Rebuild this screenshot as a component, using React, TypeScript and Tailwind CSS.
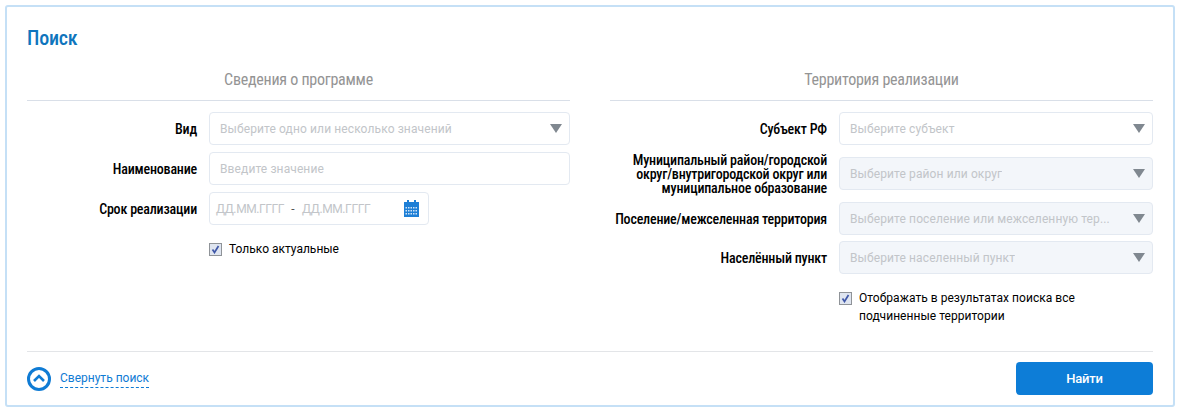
function Caret() {
  return (
    <svg width="12" height="9" viewBox="0 0 12 9" className="shrink-0">
      <path d="M0 0H12L6 9Z" fill="#808890" />
    </svg>
  );
}

function Select({ text, disabled }: { text: string; disabled?: boolean }) {
  return (
    <div className={`flex h-[33px] flex-1 min-w-0 items-center justify-between rounded border border-[#e3e9f1] pl-[10px] pr-[7px] ${disabled ? "bg-[#f3f6fa]" : "bg-white"}`}>
      <span className="text-[12px] tracking-[0.11px] text-[#c2c5c9] truncate">{text}</span>
      <Caret />
    </div>
  );
}

function Label({ children, w }: { children: React.ReactNode; w: string }) {
  return (
    <div className={`${w} shrink-0 text-right text-[14px] leading-[14px] font-medium text-black [font-stretch:75%] tracking-[-0.2px]`}>
      {children}
    </div>
  );
}

function Check() {
  return (
    <span className="flex h-[13px] w-[13px] shrink-0 items-center justify-center border border-[#8f9398] bg-[#dfe5f0]">
      <svg width="9" height="9" viewBox="0 0 9 9">
        <path d="M1.5 4.5L3.5 7.5L7.5 1" fill="none" stroke="#3f57a8" strokeWidth="1.7" />
      </svg>
    </span>
  );
}

function Calendar() {
  return (
    <svg width="15" height="17" viewBox="0 0 15 17" className="shrink-0">
      <rect x="0" y="2" width="15" height="15" fill="#1e7fd6" />
      <rect x="3" y="0" width="2" height="3" fill="#1e7fd6" />
      <rect x="10" y="0" width="2" height="3" fill="#1e7fd6" />
      <g fill="#cfe4f7">
        {[7, 10, 13].flatMap((y) =>
          [1.5, 4, 6.5, 9, 11.5].map((x) => <rect key={`${x}-${y}`} x={x} y={y} width="1.5" height="1.5" />)
        )}
      </g>
    </svg>
  );
}

function Heading({ children }: { children: React.ReactNode }) {
  return (
    <div className="mb-[11px] flex h-[31px] items-start justify-center border-b border-[#d9dfe8] text-[16px] leading-[20px] font-[450] tracking-[-0.25px] text-[#949494] [font-stretch:75%]">
      {children}
    </div>
  );
}

export default function App() {
  return (
    <div className="h-[413px] w-[1181px] bg-white p-[5px] font-['Roboto',sans-serif]">
      <div className="flex h-[402px] w-[1170px] flex-col rounded-[3px] border-2 border-[#c5e0f6] px-[20px] pt-[19px]">
        <h1 className="h-[24px] text-[20px] leading-[24px] font-medium tracking-[-0.2px] text-[#0f75bd] [font-stretch:75%]">Поиск</h1>
        <div className="mt-[20px] flex h-[282px] gap-[40px] border-b border-[#e3e5e8]">
          <div className="w-[543px]">
            <Heading>Сведения о программе</Heading>
            <div className="flex flex-col gap-[7px]">
              <div className="flex h-[33px] items-center gap-[12px]">
                <Label w="w-[170px]">Вид</Label>
                <Select text="Выберите одно или несколько значений" />
              </div>
              <div className="flex h-[33px] items-center gap-[12px]">
                <Label w="w-[170px]">Наименование</Label>
                <div className="flex h-[33px] flex-1 items-center rounded border border-[#e3e9f1] pl-[10px]">
                  <span className="text-[12px] tracking-[0.11px] text-[#c2c5c9]">Введите значение</span>
                </div>
              </div>
              <div className="flex h-[33px] items-center gap-[12px]">
                <Label w="w-[170px]">Срок реализации</Label>
                <div className="flex h-[33px] w-[220px] items-center justify-between rounded border border-[#e3e9f1] pl-[6px] pr-[9px] text-[12px] text-[#c2c5c9]">
                  <span className="flex items-center tracking-[-0.4px]">
                    <span>ДД.ММ.ГГГГ</span>
                    <span className="ml-[7px] mr-[8px] text-[#555]">-</span>
                    <span>ДД.ММ.ГГГГ</span>
                  </span>
                  <Calendar />
                </div>
              </div>
              <div className="ml-[182px] mt-[9px] flex items-center gap-[7px] text-[12px] leading-[16px] text-black">
                <Check />
                <span>Только актуальные</span>
              </div>
            </div>
          </div>
          <div className="w-[543px]">
            <Heading>Территория реализации</Heading>
            <div className="flex flex-col">
              <div className="flex h-[33px] items-center gap-[12px]">
                <Label w="w-[217px]">Субъект РФ</Label>
                <Select text="Выберите субъект" />
              </div>
              <div className="mt-[12px] flex h-[33px] items-center gap-[12px]">
                <Label w="w-[217px]">Муниципальный район/городской округ/внутригородской округ или муниципальное образование</Label>
                <Select disabled text="Выберите район или округ" />
              </div>
              <div className="mt-[12px] flex h-[33px] items-center gap-[12px]">
                <Label w="w-[217px]">Поселение/межселенная территория</Label>
                <Select disabled text="Выберите поселение или межселенную тер..." />
              </div>
              <div className="mt-[6px] flex h-[33px] items-center gap-[12px]">
                <Label w="w-[217px]">Населённый пункт</Label>
                <Select disabled text="Выберите населенный пункт" />
              </div>
              <div className="ml-[229px] mt-[15px] flex items-start gap-[7px] text-[12px] leading-[18px] text-black">
                <span className="mt-[3px]"><Check /></span>
                <span className="w-[250px] tracking-[0.04px]">Отображать в результатах поиска все подчиненные территории</span>
              </div>
            </div>
          </div>
        </div>
        <div className="flex flex-1 items-start justify-between pt-[10px]">
          <div className="mt-[5px] flex items-center gap-[9px]">
            <svg width="24" height="24" viewBox="0 0 24 24" className="shrink-0">
              <circle cx="12" cy="12" r="10.5" fill="none" stroke="#0f7bd4" strokeWidth="3" />
              <path d="M7 14L12 9L17 14" fill="none" stroke="#0f7bd4" strokeWidth="2.6" />
            </svg>
            <span className="border-b border-dashed border-[#0f7bd4] text-[12px] leading-[17px] text-[#0f7bd4]">Свернуть поиск</span>
          </div>
          <button className="flex h-[33px] w-[137px] items-center justify-center rounded bg-[#0d7dd7] text-[13px] font-medium tracking-[-0.2px] text-white">
            Найти
          </button>
        </div>
      </div>
    </div>
  );
}
